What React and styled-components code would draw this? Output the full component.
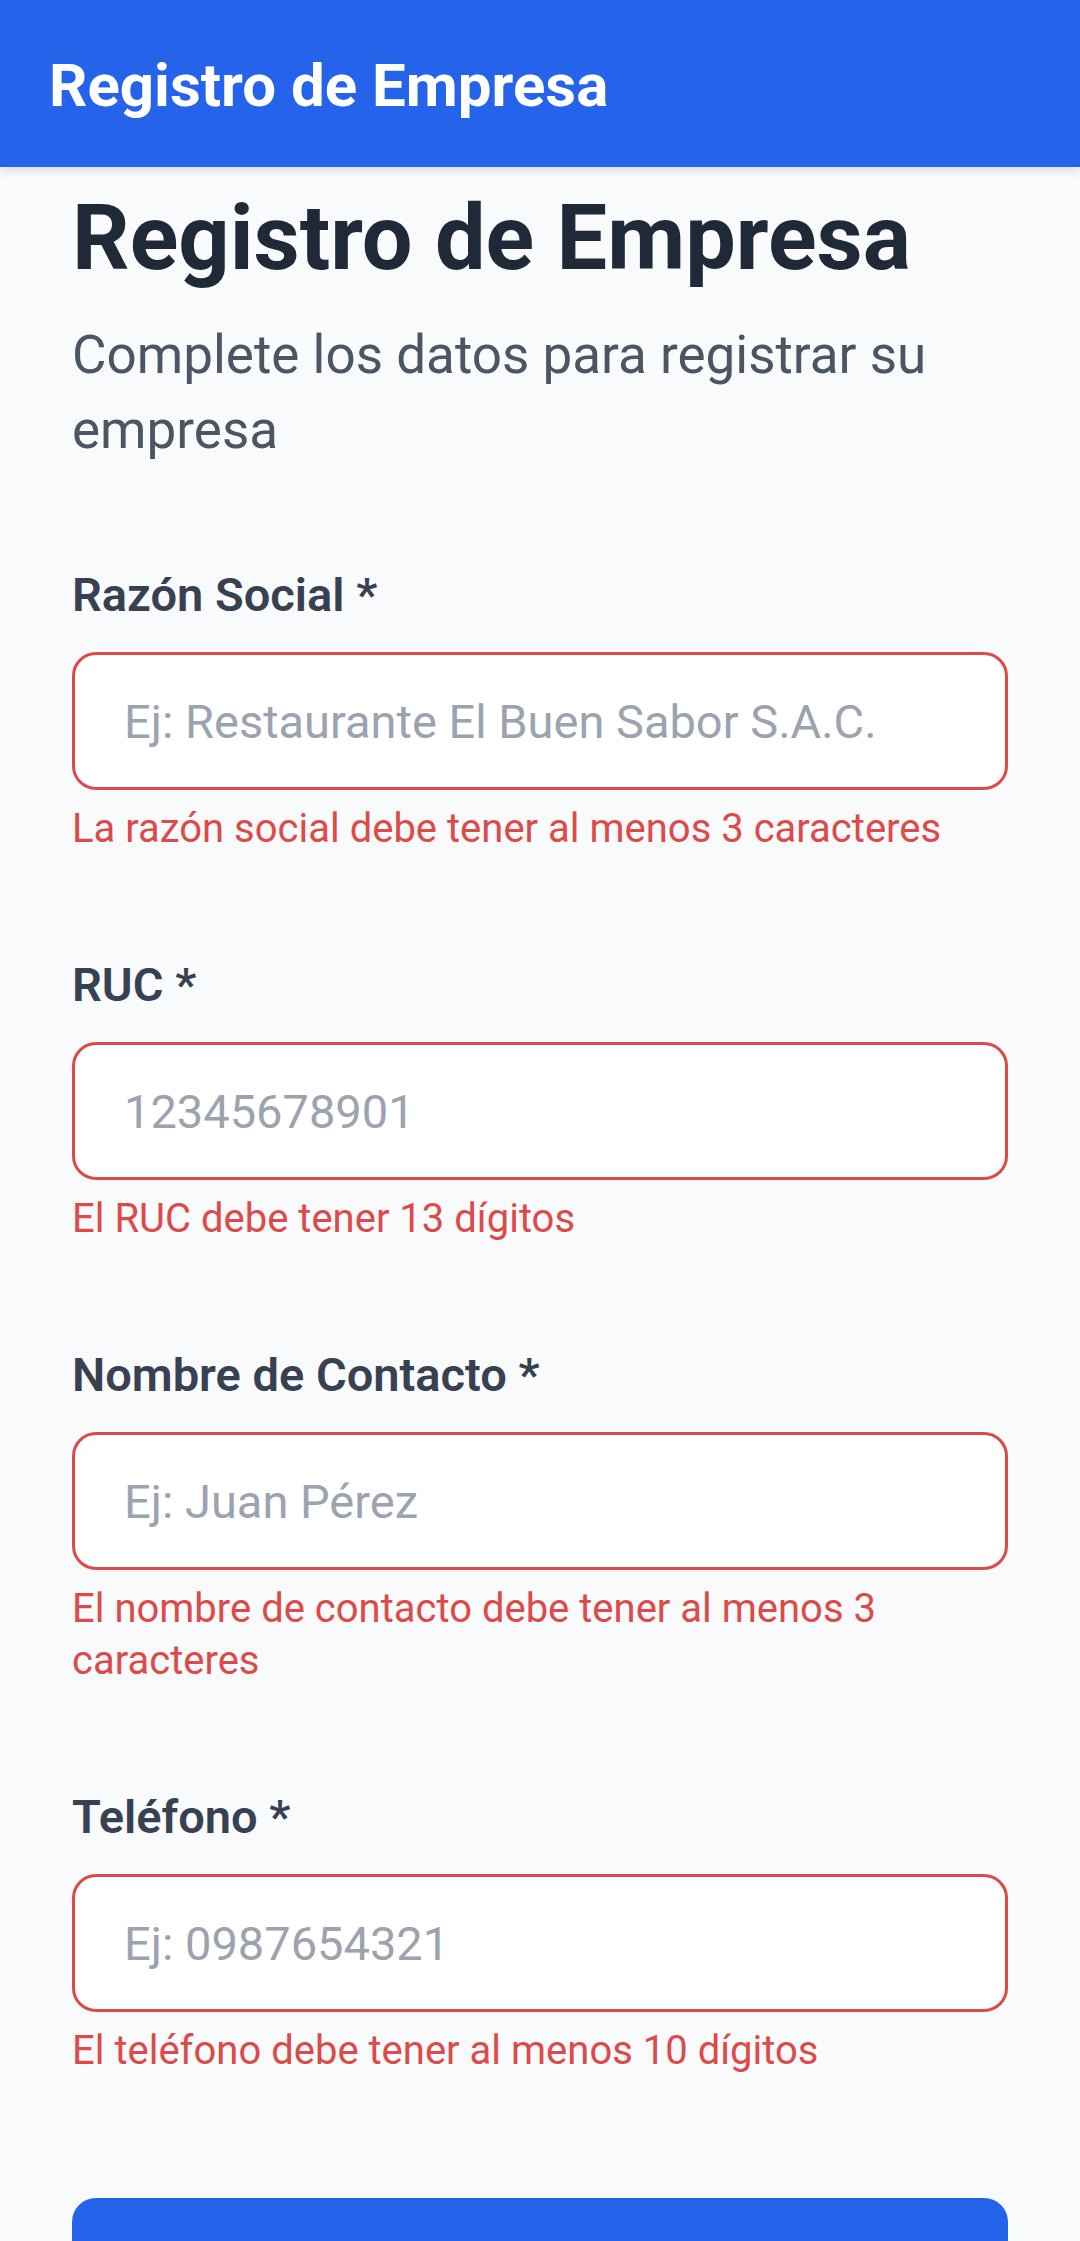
import React from 'react'
import styled, { createGlobalStyle } from 'styled-components';

const GlobalStyle = createGlobalStyle`
    body {
        margin: 0;
        background: #f9fafb;
        font-family: Roboto, "Liberation Sans", sans-serif;
    }
`;

const TopBar = styled.header`
    height: 167px;
    box-sizing: border-box;
    padding: 4px 49px 0;
    display: flex;
    align-items: center;
    background: #2563eb;
    box-shadow: 0 3px 10px rgba(0, 0, 0, .14);
    position: relative;
`;

const TopTitle = styled.h1`
    margin: 0;
    font-size: 60px;
    font-weight: 700;
    color: #fff;
`;

const Main = styled.main`
    padding: 18px 72px 60px;
`;

const Heading = styled.h2`
    margin: 0;
    font-size: 90px;
    line-height: 108px;
    font-weight: 700;
    color: #1f2937;
`;

const Subtitle = styled.p`
    margin: 25px 0 0;
    font-size: 53px;
    line-height: 75px;
    color: #4b5563;
`;

const Form = styled.form`
    margin-top: 91px;
    display: flex;
    flex-direction: column;
`;

const Field = styled.div`
    margin-bottom: 94px;
`;

const Label = styled.label`
    display: block;
    margin-bottom: 21px;
    font-size: 47px;
    line-height: 72px;
    font-weight: 600;
    color: #374151;
`;

const Input = styled.input`
    display: block;
    width: 100%;
    height: 138px;
    box-sizing: border-box;
    padding: 0 48px 0 49px;
    border: 3px solid ${p => p.$invalid ? '#dc4a4a' : '#d1d5db'};
    border-radius: 24px;
    background: #fff;
    font-family: inherit;
    font-size: 47px;
    color: #111827;
    outline: none;

    &::placeholder {
        color: #9ca3af;
        opacity: 1;
    }
`;

const ErrorText = styled.p`
    margin: 13px 0 0;
    font-size: 40px;
    line-height: 52px;
    color: #dc4a4a;
`;

const SubmitButton = styled.button`
    margin-top: 27px;
    height: 150px;
    border: none;
    border-radius: 24px;
    background: #2563eb;
    color: #fff;
    font-family: inherit;
    font-size: 48px;
    font-weight: 600;
`;

const fields = [
    { id: 'razon', label: 'Razón Social *', placeholder: 'Ej: Restaurante El Buen Sabor S.A.C.', error: 'La razón social debe tener al menos 3 caracteres' },
    { id: 'ruc', label: 'RUC *', placeholder: '12345678901', error: 'El RUC debe tener 13 dígitos' },
    { id: 'contacto', label: 'Nombre de Contacto *', placeholder: 'Ej: Juan Pérez', error: 'El nombre de contacto debe tener al menos 3 caracteres' },
    { id: 'telefono', label: 'Teléfono *', placeholder: 'Ej: 0987654321', error: 'El teléfono debe tener al menos 10 dígitos' },
];

const App = () => {
    return (
        <>
            <GlobalStyle />
            <TopBar>
                <TopTitle>Registro de Empresa</TopTitle>
            </TopBar>
            <Main>
                <Heading>Registro de Empresa</Heading>
                <Subtitle>Complete los datos para registrar su empresa</Subtitle>
                <Form onSubmit={e => e.preventDefault()}>
                    {fields.map(f => (
                        <Field key={f.id}>
                            <Label htmlFor={f.id}>{f.label}</Label>
                            <Input id={f.id} placeholder={f.placeholder} $invalid={!!f.error} />
                            {f.error && <ErrorText>{f.error}</ErrorText>}
                        </Field>
                    ))}
                    <SubmitButton type="submit">Registrar Empresa</SubmitButton>
                </Form>
            </Main>
        </>
    )
};

export default App;
